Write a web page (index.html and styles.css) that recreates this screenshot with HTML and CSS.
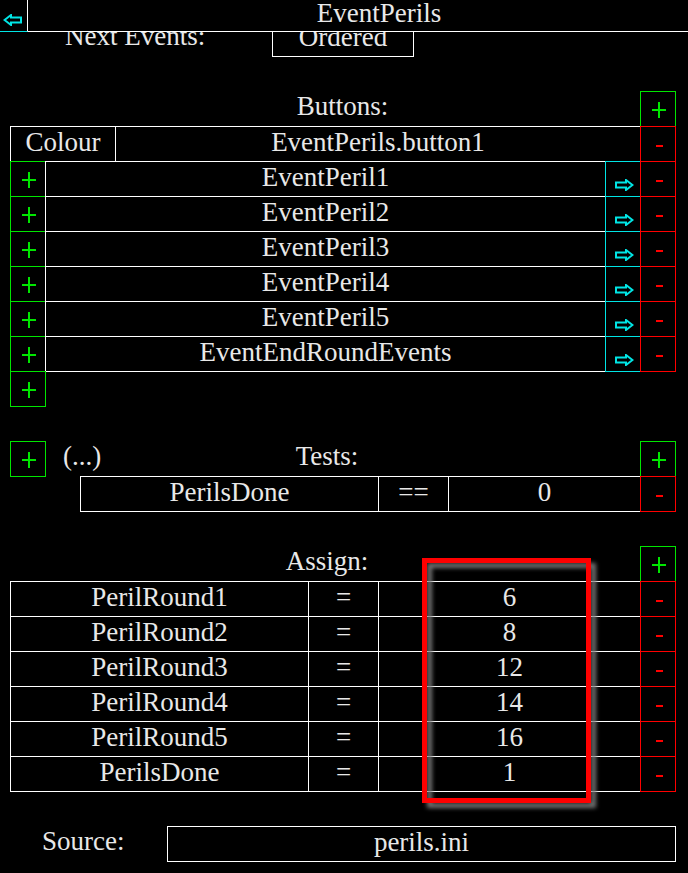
FILE: index.html
```html
<!DOCTYPE html>
<html>
<head>
<meta charset="utf-8">
<link rel="stylesheet" href="styles.css">
</head>
<body>
<div class="header">
  <div class="back"><svg class="arrow-l" width="19" height="12" viewBox="0 0 19 12"><path d="M18 3.5 H8 V1 L1.5 6 L8 11 V8.5 H18 Z" fill="none" stroke="#00e5e5" stroke-width="2"/></svg></div>
  <div class="title">EventPerils</div>
</div>
<div class="main">
  <div class="row first">
    <div class="label next">Next Events:</div>
    <div class="cell w-ordered">Ordered</div>
  </div>
  <div class="row blank"></div>

  <div class="row">
    <div class="spacer"></div>
    <div class="label center w-btnlabel">Buttons:</div>
    <div class="cell plus"><svg width="16" height="16" viewBox="0 0 16 16"><path d="M8 0 V16 M1 8 H15" stroke="#00e600" stroke-width="2"/></svg></div>
  </div>
  <div class="row">
    <div class="cell w-colour">Colour</div>
    <div class="cell w-colmain">EventPerils.button1</div>
    <div class="cell minus"><span class="dash"></span></div>
  </div>
  <div class="row">
    <div class="cell plus"><svg width="16" height="16" viewBox="0 0 16 16"><path d="M8 0 V16 M1 8 H15" stroke="#00e600" stroke-width="2"/></svg></div>
    <div class="cell w-name">EventPeril1</div>
    <div class="cell arrow"><svg width="19" height="12" viewBox="0 0 19 12"><path d="M1 3.5 H11 V1 L17.5 6 L11 11 V8.5 H1 Z" fill="none" stroke="#00e5e5" stroke-width="2"/></svg></div>
    <div class="cell minus"><span class="dash"></span></div>
  </div>
  <div class="row">
    <div class="cell plus"><svg width="16" height="16" viewBox="0 0 16 16"><path d="M8 0 V16 M1 8 H15" stroke="#00e600" stroke-width="2"/></svg></div>
    <div class="cell w-name">EventPeril2</div>
    <div class="cell arrow"><svg width="19" height="12" viewBox="0 0 19 12"><path d="M1 3.5 H11 V1 L17.5 6 L11 11 V8.5 H1 Z" fill="none" stroke="#00e5e5" stroke-width="2"/></svg></div>
    <div class="cell minus"><span class="dash"></span></div>
  </div>
  <div class="row">
    <div class="cell plus"><svg width="16" height="16" viewBox="0 0 16 16"><path d="M8 0 V16 M1 8 H15" stroke="#00e600" stroke-width="2"/></svg></div>
    <div class="cell w-name">EventPeril3</div>
    <div class="cell arrow"><svg width="19" height="12" viewBox="0 0 19 12"><path d="M1 3.5 H11 V1 L17.5 6 L11 11 V8.5 H1 Z" fill="none" stroke="#00e5e5" stroke-width="2"/></svg></div>
    <div class="cell minus"><span class="dash"></span></div>
  </div>
  <div class="row">
    <div class="cell plus"><svg width="16" height="16" viewBox="0 0 16 16"><path d="M8 0 V16 M1 8 H15" stroke="#00e600" stroke-width="2"/></svg></div>
    <div class="cell w-name">EventPeril4</div>
    <div class="cell arrow"><svg width="19" height="12" viewBox="0 0 19 12"><path d="M1 3.5 H11 V1 L17.5 6 L11 11 V8.5 H1 Z" fill="none" stroke="#00e5e5" stroke-width="2"/></svg></div>
    <div class="cell minus"><span class="dash"></span></div>
  </div>
  <div class="row">
    <div class="cell plus"><svg width="16" height="16" viewBox="0 0 16 16"><path d="M8 0 V16 M1 8 H15" stroke="#00e600" stroke-width="2"/></svg></div>
    <div class="cell w-name">EventPeril5</div>
    <div class="cell arrow"><svg width="19" height="12" viewBox="0 0 19 12"><path d="M1 3.5 H11 V1 L17.5 6 L11 11 V8.5 H1 Z" fill="none" stroke="#00e5e5" stroke-width="2"/></svg></div>
    <div class="cell minus"><span class="dash"></span></div>
  </div>
  <div class="row">
    <div class="cell plus"><svg width="16" height="16" viewBox="0 0 16 16"><path d="M8 0 V16 M1 8 H15" stroke="#00e600" stroke-width="2"/></svg></div>
    <div class="cell w-name">EventEndRoundEvents</div>
    <div class="cell arrow"><svg width="19" height="12" viewBox="0 0 19 12"><path d="M1 3.5 H11 V1 L17.5 6 L11 11 V8.5 H1 Z" fill="none" stroke="#00e5e5" stroke-width="2"/></svg></div>
    <div class="cell minus"><span class="dash"></span></div>
  </div>
  <div class="row">
    <div class="cell plus"><svg width="16" height="16" viewBox="0 0 16 16"><path d="M8 0 V16 M1 8 H15" stroke="#00e600" stroke-width="2"/></svg></div>
  </div>
  <div class="row blank"></div>

  <div class="row">
    <div class="cell plus"><svg width="16" height="16" viewBox="0 0 16 16"><path d="M8 0 V16 M1 8 H15" stroke="#00e600" stroke-width="2"/></svg></div>
    <div class="label paren">(...)</div>
    <div class="label center w-testlabel">Tests:</div>
    <div class="cell plus"><svg width="16" height="16" viewBox="0 0 16 16"><path d="M8 0 V16 M1 8 H15" stroke="#00e600" stroke-width="2"/></svg></div>
  </div>
  <div class="row indent">
    <div class="cell w-tname">PerilsDone</div>
    <div class="cell w-op">==</div>
    <div class="cell w-tval">0</div>
    <div class="cell minus"><span class="dash"></span></div>
  </div>
  <div class="row blank"></div>

  <div class="row">
    <div class="label center w-assignlabel">Assign:</div>
    <div class="cell plus"><svg width="16" height="16" viewBox="0 0 16 16"><path d="M8 0 V16 M1 8 H15" stroke="#00e600" stroke-width="2"/></svg></div>
  </div>
  <div class="assign">
    <div class="row">
      <div class="cell w-aname">PerilRound1</div>
      <div class="cell w-op">=</div>
      <div class="cell w-aval">6</div>
      <div class="cell minus"><span class="dash"></span></div>
    </div>
    <div class="row">
      <div class="cell w-aname">PerilRound2</div>
      <div class="cell w-op">=</div>
      <div class="cell w-aval">8</div>
      <div class="cell minus"><span class="dash"></span></div>
    </div>
    <div class="row">
      <div class="cell w-aname">PerilRound3</div>
      <div class="cell w-op">=</div>
      <div class="cell w-aval">12</div>
      <div class="cell minus"><span class="dash"></span></div>
    </div>
    <div class="row">
      <div class="cell w-aname">PerilRound4</div>
      <div class="cell w-op">=</div>
      <div class="cell w-aval">14</div>
      <div class="cell minus"><span class="dash"></span></div>
    </div>
    <div class="row">
      <div class="cell w-aname">PerilRound5</div>
      <div class="cell w-op">=</div>
      <div class="cell w-aval">16</div>
      <div class="cell minus"><span class="dash"></span></div>
    </div>
    <div class="row">
      <div class="cell w-aname">PerilsDone</div>
      <div class="cell w-op">=</div>
      <div class="cell w-aval">1</div>
      <div class="cell minus"><span class="dash"></span></div>
    </div>
    <div class="highlight"></div>
  </div>
  <div class="row blank"></div>

  <div class="row">
    <div class="label source">Source:</div>
    <div class="cell w-source">perils.ini</div>
  </div>
</div>
</body>
</html>
```

FILE: styles.css
```css
html, body {
  margin: 0;
  padding: 0;
  background: #000;
}
body {
  width: 688px;
  height: 873px;
  overflow: hidden;
  font-family: "Liberation Serif", "Times New Roman", serif;
  font-size: 27px;
  color: #e8e8e8;
}
.header {
  display: flex;
  height: 32px;
  background: #000;
}
.back {
  box-sizing: border-box;
  width: 28px;
  height: 32px;
  border-right: 1px solid #fff;
  border-bottom: 1px solid #00e5e5;
  display: flex;
  align-items: center;
  justify-content: center;
  padding-top: 8px;
  padding-right: 3px;
}
.title {
  flex: 1;
  box-sizing: border-box;
  height: 32px;
  border-bottom: 1px solid #fff;
  text-align: center;
  line-height: 26px;
  padding-left: 42px;
}
.main {
  height: 841px;
  overflow: hidden;
  padding-left: 10px;
}
.row {
  display: flex;
  height: 35px;
}
.row.first {
  margin-top: -11px;
}
.row.indent {
  padding-left: 70px;
}
.cell {
  box-sizing: border-box;
  flex: none;
  height: 36px;
  margin-right: -1px;
  border: 1px solid #fff;
  text-align: center;
  line-height: 31px;
  white-space: nowrap;
  background: #000;
}
.plus, .minus, .arrow {
  width: 36px;
  display: flex;
  align-items: center;
  justify-content: center;
}
.plus {
  border-color: #00e600;
  padding-left: 2px;
  padding-top: 1px;
}
.minus {
  border-color: #f00;
  padding-left: 2px;
  padding-top: 3px;
}
.arrow {
  border-color: #00e5e5;
  padding-left: 3px;
  padding-top: 11px;
}
.dash {
  display: block;
  width: 7px;
  height: 2px;
  background: #f00;
}
.label {
  flex: none;
  box-sizing: border-box;
  height: 35px;
  line-height: 31px;
  white-space: nowrap;
}
.label.center {
  text-align: center;
}
.spacer {
  flex: none;
  width: 35px;
}
.next {
  width: 262px;
  padding-left: 55px;
}
.source {
  width: 157px;
  padding-left: 32px;
}
.paren {
  width: 54px;
  padding-left: 18px;
}
.w-btnlabel { width: 595px; }
.w-testlabel { width: 541px; padding-right: 85px; }
.w-assignlabel { width: 630px; padding-left: 4px; }
.w-ordered { width: 142px; }
.w-colour { width: 106px; }
.w-colmain { width: 526px; }
.w-name { width: 561px; }
.w-tname { width: 299px; }
.w-op { width: 71px; }
.w-tval { width: 193px; }
.w-aname { width: 299px; }
.w-aval { width: 263px; }
.w-source { width: 509px; }
.assign {
  position: relative;
}
.highlight {
  position: absolute;
  left: 412px;
  top: -23px;
  width: 169px;
  height: 245px;
  box-sizing: border-box;
  border: 5px solid #f00;
  filter: drop-shadow(5px 5px 2px rgba(120, 120, 120, 0.95));
  pointer-events: none;
}
```
